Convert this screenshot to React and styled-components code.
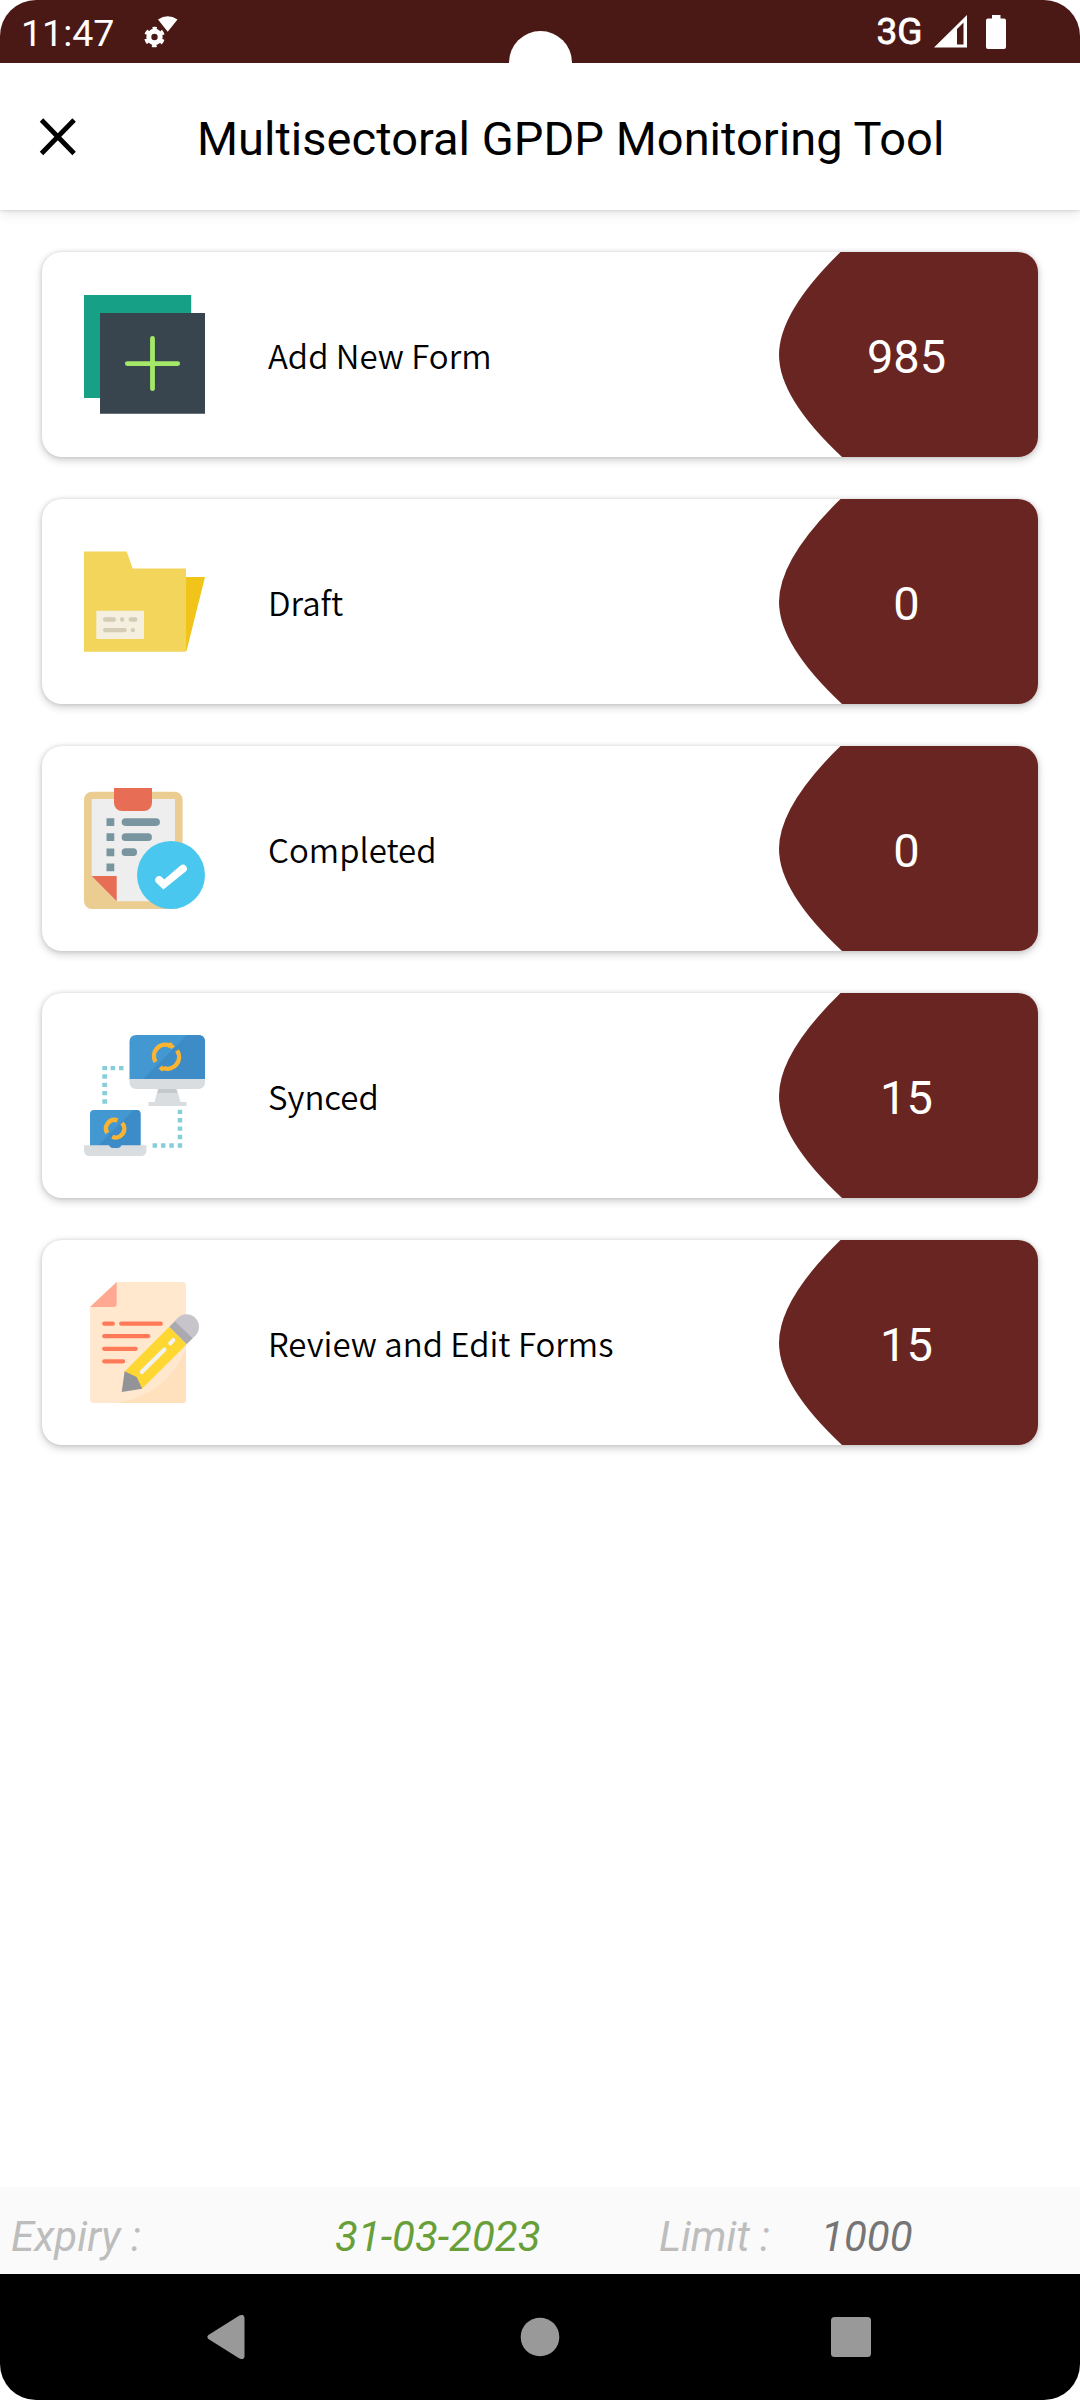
import React from "react";
import styled, { createGlobalStyle } from "styled-components";

const GlobalStyle = createGlobalStyle`
  *, *::before, *::after { box-sizing: border-box; }
  body { margin: 0; background: #fff; }
`;

const Screen = styled.div`
  display: flex;
  flex-direction: column;
  width: 1080px;
  height: 2400px;
  overflow: hidden;
  border-radius: 36px;
  background: #fff;
  font-family: Roboto, "Liberation Sans", sans-serif;
`;

const StatusBar = styled.header`
  position: relative;
  display: flex;
  flex: none;
  align-items: center;
  justify-content: space-between;
  height: 63px;
  padding: 0 74px 0 21px;
  overflow: hidden;
  background: #4a1916;
  color: #fff;
`;

const StatusGroup = styled.div`
  display: flex;
  align-items: center;
`;

const Clock = styled.span`
  width: 122px;
  padding-top: 3px;
  font-size: 37.5px;
  line-height: 44px;
`;

const Network = styled.span`
  width: 57.5px;
  font-size: 37px;
  font-weight: 400;
  -webkit-text-stroke: 0.8px #fff;
  line-height: 44px;
`;

const StatusIcon = styled.svg`
  display: block;
  flex: none;
  margin-left: ${(p) => p.$gap || 0}px;
`;

const Camera = styled.div`
  position: absolute;
  top: 31px;
  left: 509px;
  width: 63px;
  height: 63px;
  border-radius: 50%;
  background: #fff;
`;

const TitleBar = styled.div`
  display: flex;
  flex: none;
  align-items: center;
  height: 147px;
  padding-left: 36px;
  background: #fff;
  box-shadow: 0 2px 12px rgba(0, 0, 0, 0.13), 0 1px 3px rgba(0, 0, 0, 0.1);
`;

const CloseButton = styled.button`
  display: flex;
  width: 161px;
  padding: 0;
  border: 0;
  background: none;
`;

const Title = styled.h1`
  margin: 4px 0 0;
  font-size: 47px;
  font-weight: 400;
  letter-spacing: 0.03px;
  line-height: 56px;
  white-space: nowrap;
  color: #000;
`;

const FormList = styled.main`
  display: flex;
  flex: 1;
  flex-direction: column;
  gap: 42px;
  padding: 42px;
`;

const Card = styled.section`
  display: flex;
  align-items: center;
  height: 205px;
  padding-left: 42px;
  border-radius: 20px;
  background: #fff;
  box-shadow: 0 3px 8px rgba(0, 0, 0, 0.2), 0 0 4px rgba(0, 0, 0, 0.12);
`;

const CardIcon = styled.svg`
  display: block;
  flex: none;
  width: 121px;
  height: 121px;
`;

const Label = styled.span`
  flex: 1;
  padding-left: 63px;
  font-family: "Noto Sans CJK SC", "Noto Sans", sans-serif;
  font-size: 33px;
  font-weight: 350;
  line-height: 48px;
  color: #000;
`;

const Badge = styled.div`
  display: flex;
  align-items: center;
  justify-content: center;
  width: 260px;
  height: 205px;
  padding: 4px 3px 0 0;
  border-radius: 0 20px 20px 0;
  background: #692522;
  clip-path: path("M62.5 0 Q1 60 1 103 Q1 146 64 205 H260 V0 Z");
  color: #fff;
  font-size: 47px;
  line-height: 56px;
`;

const InfoBar = styled.footer`
  display: flex;
  flex: none;
  align-items: center;
  height: 87px;
  padding: 12px 0 0 11px;
  background: #fafafa;
  font-size: 42px;
  font-style: italic;
  line-height: 50px;
`;

const InfoText = styled.span`
  width: ${(p) => p.$width}px;
  color: ${(p) => p.$color};
  white-space: nowrap;
`;

const NavBar = styled.nav`
  display: flex;
  flex: none;
  align-items: center;
  justify-content: space-around;
  height: 126px;
  padding: 0 74px;
  background: #000;
`;

const NavButton = styled.button`
  display: flex;
  justify-content: center;
  width: 120px;
  padding: 0;
  border: 0;
  background: none;
`;

const AddIcon = () => (
  <CardIcon viewBox="0 0 121 121">
    <path fill="#16a085" d="M0 1h107.2v103H0z" />
    <path fill="#38454f" d="M16 19h105v100.8H16z" />
    <path d="M68.5 44.3v50.4M43.3 69.6h50.4" stroke="#a4e869" strokeWidth="4.8" strokeLinecap="round" />
  </CardIcon>
);

const FolderIcon = () => (
  <CardIcon viewBox="0 0 121 121">
    <path fill="#f0c419" d="M100 36h21l-18.5 74H100z" />
    <path fill="#f3d55b" d="M0 10.5h42.7l6 17H102v83.2H0z" />
    <path fill="#f4efdf" d="M12.3 69.8H60V98H12.3z" />
    <path
      d="M21.2 78.5h8.7M38.1 78.5h.1M46.8 78.5h4.4M21.2 89.1h19.4M48.8 89.1h.1"
      stroke="#d5ccb6"
      strokeWidth="4.4"
      strokeLinecap="round"
    />
  </CardIcon>
);

const ClipboardIcon = () => (
  <CardIcon viewBox="0 0 121 121">
    <rect y="3.7" width="98.6" height="117.3" rx="8" fill="#ebcd91" />
    <path fill="#eee" d="M7.7 11H91v102.3H32.7L7.7 88z" />
    <path fill="#e76e54" d="M7.7 88h25v25.3zM30 0h38v15a8 8 0 0 1-8 8H38a8 8 0 0 1-8-8z" />
    <path
      fill="#7996a0"
      d="M22.5 30.2h7.8V38h-7.8zM22.5 45.3h7.8v7.8h-7.8zM22.5 60.4h7.8v7.8h-7.8zM22.5 75.4h7.8v7.8h-7.8z"
    />
    <path
      d="M41.5 34.1h30.6M41.5 49.2h22.6M41.5 64.2h7.7"
      stroke="#7996a0"
      strokeWidth="7.7"
      strokeLinecap="round"
    />
    <circle cx="87" cy="87" r="34" fill="#4ac7ef" />
    <path
      fill="#fff"
      d="M71.8 94.2a4 4 0 0 1 5.4-5.6l3 2.8 16.4-13.9a4 4 0 0 1 5.4 5.8L79.4 101.4z"
    />
  </CardIcon>
);

const SyncIcon = () => (
  <CardIcon viewBox="0 0 121 121">
    <g transform="translate(0 -1)">
      <path fill="#4398d1" d="M45.5 45V8q0-7 7-7h61.5q7 0 7 7v37z" />
      <path fill="#3d8cc8" d="M59 45 103 1h11q7 0 7 7v37z" />
      <path fill="#d9dde0" d="M45.5 45H121v3q0 7-7 7H52.5q-7 0-7-7zM74 55h19l3.5 13h6v4H64.500v-4h6z" />
      <path fill="#c4c9cc" d="M74.5 55h17.5l1 4H73.5z" />
      <path fill="#4398d1" d="M6 112V80q0-4 4-4h42.5q4 0 4 4v32z" />
      <path fill="#3d8cc8" d="M14 111.500 49.500 76h3q4 0 4 4v32z" />
      <path fill="#d9dde0" d="M0 111.300h62.500V116q0 6-6 6H6q-6 0-6-6z" />
      <path fill="#3d8cc8" d="M25 111h12.500q-1 3-4 3h-4.500q-3 0-4-3z" />
      <g fill="#87ced9">
        <path d="M18.3 32h4.800v4.300h-4.800zM26.600 32h4.500v4.300h-4.500zM35 32h4.500v4.300H35zM18.300 40.300h4.800v4.400h-4.800zM18.300 48.700h4.800V53h-4.800zM18.300 57h4.800v4.300h-4.800zM18.300 65.300h4.800v4.500h-4.800z" />
        <path d="M93.700 75.700h4.500V80h-4.500zM93.700 84h4.500v4.400h-4.500zM93.700 92.400h4.500v4.400h-4.500zM93.700 100.800h4.500v4.400h-4.500zM93.700 109.200h4.500v4.600h-4.500zM85.300 109.200h4.500v4.600h-4.500zM77 109.200h4.500v4.600H77zM68.600 109.200h4.500v4.600h-4.500z" />
      </g>
      <g fill="none" stroke="#fbb431" strokeWidth="4.400">
        <path d="M71.500 28A11.600 11.600 0 0 1 86 11.500M93 16.500A11.600 11.600 0 0 1 79.500 34" />
        <path d="M23.300 99A8.600 8.600 0 0 1 33.500 86.400M38 89A8.600 8.600 0 0 1 28.200 102.700" />
      </g>
      <path fill="#fbb431" d="m86.500 8 4.500 4.500-3.500 2.500-4-2zM78 31.500l-3.500 3 3.500 3 3.500-3z" />
    </g>
  </CardIcon>
);

const EditIcon = () => (
  <CardIcon viewBox="0 0 121 121">
    <path fill="#ffe8cd" d="M32.700 0h66q3.300 0 3.300 3.300v114.400q0 3.300-3.300 3.300H9.300Q6 121 6 117.700V25z" />
    <path fill="#ffe1bd" d="M102 67v50.700q0 3.300-3.300 3.300H32Q83 113 102 67z" />
    <path fill="#ffa993" d="M32.700 0v22q0 3-3 3H6z" />
    <path
      d="M20.200 41.700h8.600M37.200 41.700h39.600M20.200 54.200h44M20.200 66.800h31.500M20.200 79.300h19"
      stroke="#ff7a58"
      strokeWidth="4.2"
      strokeLinecap="round"
    />
    <path fill="#fed732" d="M85.300 44.700 102.700 62.300 58 106.700l-7.300-10L40.600 89.500z" />
    <path fill="#acaab1" d="m85.300 44.700 6-6L109 56l-6.300 6.300z" />
    <path fill="#c7c5cb" d="m90.700 39 3-3a12.500 12.500 0 0 1 17.700 17.700l-2.700 2.600z" />
    <path fill="#939498" d="M40.600 89.200 52.700 95 58.200 106.800 37.700 110z" />
    <path d="m57.800 90 22.700-22.600M86.300 61.300l3-3.200" stroke="#f2f2ef" strokeWidth="4.200" strokeLinecap="round" />
  </CardIcon>
);

const FORMS = [
  { label: "Add New Form", count: 985, Icon: AddIcon },
  { label: "Draft", count: 0, Icon: FolderIcon },
  { label: "Completed", count: 0, Icon: ClipboardIcon },
  { label: "Synced", count: 15, Icon: SyncIcon },
  { label: "Review and Edit Forms", count: 15, Icon: EditIcon },
];

export default function App() {
  return (
    <>
      <GlobalStyle />
      <Screen>
        <StatusBar>
          <StatusGroup>
            <Clock>11:47</Clock>
            <StatusIcon width="36" height="36" viewBox="143 14 36 36">
              <path fill="#fff" d="M158 19.500q9.700-6.500 19.500 0L167.700 31.800z" />
              <circle cx="154.500" cy="37" r="5.700" fill="none" stroke="#fff" strokeWidth="5" />
              <circle cx="154.500" cy="37" r="8.600" fill="none" stroke="#fff" strokeWidth="3.500" strokeDasharray="4.500 4.506" strokeDashoffset="2.250" transform="rotate(-90 154.500 37)" />
            </StatusIcon>
          </StatusGroup>
          <StatusGroup>
            <Network>3G</Network>
            <StatusIcon width="33" height="34" viewBox="0 0 33 34">
              <path fill="#fff" fillRule="evenodd" d="M0 32.500 33 0v32.500zM23 14v15.500h6.500V7.500z" />
            </StatusIcon>
            <StatusIcon $gap={19} width="20" height="34" viewBox="0 0 20 34">
              <path fill="#fff" d="M6 0h8.500v3.500H18q2 0 2 2V32q0 2-2 2H2q-2 0-2-2V5.500q0-2 2-2h4z" />
            </StatusIcon>
          </StatusGroup>
          <Camera />
        </StatusBar>
        <TitleBar>
          <CloseButton aria-label="Close">
            <svg width="44" height="44" viewBox="0 0 44 44">
              <path d="m5.500 5 32.600 33.500M38.100 5 5.500 38.500" stroke="#000" strokeWidth="4.800" />
            </svg>
          </CloseButton>
          <Title>Multisectoral GPDP Monitoring Tool</Title>
        </TitleBar>
        <FormList>
          {FORMS.map(({ label, count, Icon }) => (
            <Card key={label}>
              <Icon />
              <Label>{label}</Label>
              <Badge>{count}</Badge>
            </Card>
          ))}
        </FormList>
        <InfoBar>
          <InfoText $width={324} $color="#bdbdbd">Expiry :</InfoText>
          <InfoText $width={324} $color="#689f38">31-03-2023</InfoText>
          <InfoText $width={162} $color="#bdbdbd">Limit :</InfoText>
          <InfoText $width={200} $color="#757575">1000</InfoText>
        </InfoBar>
        <NavBar>
          <NavButton aria-label="Back">
            <svg width="44" height="44" viewBox="0 0 44 44">
              <path fill="#999" d="M1.400 20 32 .8q5-2.500 5.500 2v38.400q-.5 4.500-5.500 2L1.400 24q-2-2 0-4z" />
            </svg>
          </NavButton>
          <NavButton aria-label="Home">
            <svg width="40" height="40" viewBox="0 0 40 40">
              <circle cx="20" cy="20" r="19.300" fill="#999" />
            </svg>
          </NavButton>
          <NavButton aria-label="Recent apps">
            <svg width="40" height="40" viewBox="0 0 40 40">
              <rect width="40" height="40" rx="3.500" fill="#999" />
            </svg>
          </NavButton>
        </NavBar>
      </Screen>
    </>
  );
}
